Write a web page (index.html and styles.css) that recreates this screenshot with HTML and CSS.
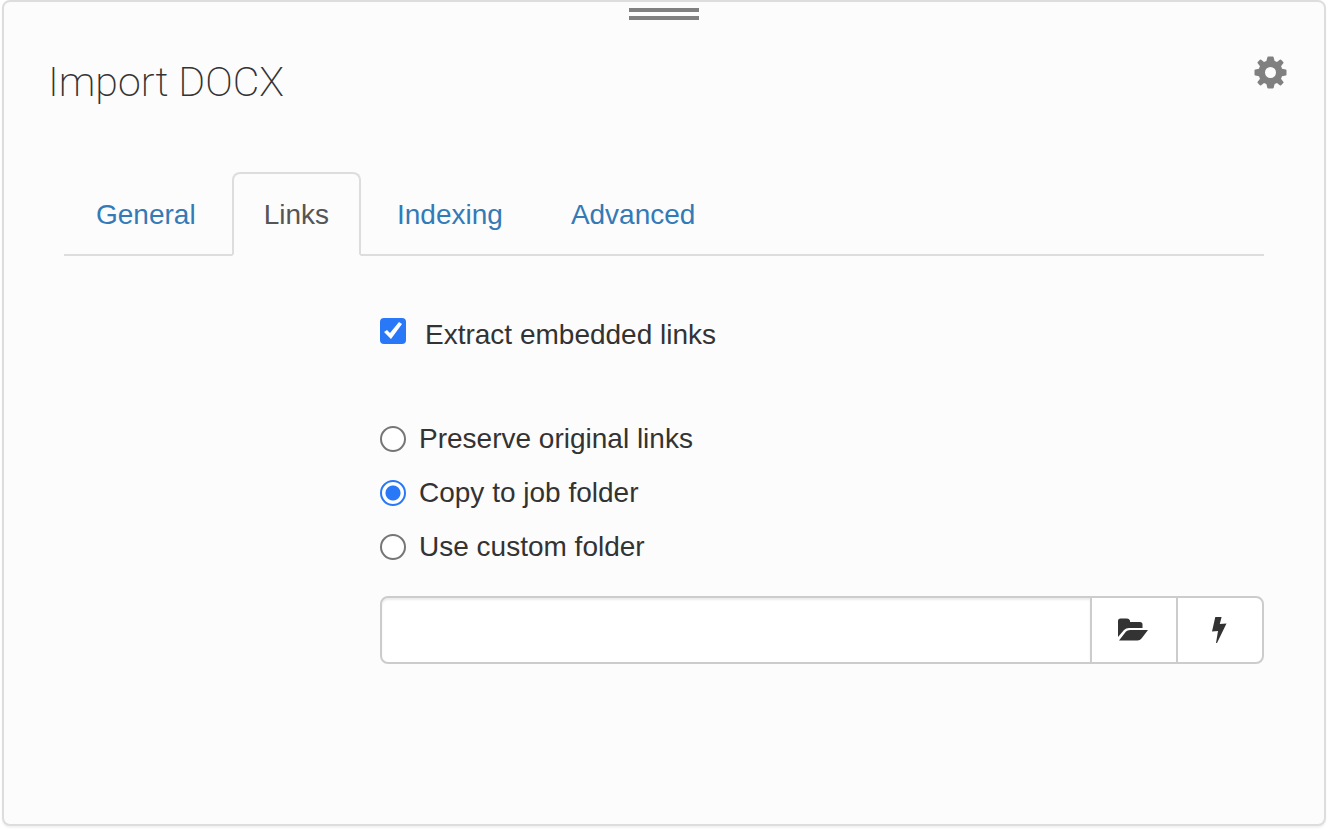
FILE: index.html
```html
<!DOCTYPE html>
<html lang="en">
<head>
  <meta charset="UTF-8">
  <meta name="viewport" content="width=device-width, initial-scale=1.0">
  <title>Import DOCX</title>
  <link rel="stylesheet" href="styles.css">
</head>
<body>
  <div class="panel">
    <div class="drag-handle"></div>

    <div class="panel-header">
      <h1 class="panel-title">Import DOCX</h1>
      <button type="button" class="settings-btn" aria-label="Settings">
        <svg width="34" height="34" viewBox="0 0 34 34" fill="currentColor">
          <path fill-rule="evenodd" d="M14.300.6H18.700Q19.500.6 19.700 1.400L20.600 5Q22 5.400 23 6L25.800 3.700Q26.500 3.200 27.100 3.700L29.300 5.900Q29.800 6.500 29.300 7.200L27 10.300Q27.600 11.300 28 12.700L31.800 13.600Q32.500 13.800 32.500 14.600V18.400Q32.500 19.200 31.800 19.400L28 20.300Q27.600 21.700 27 22.700L29.300 25.800Q29.800 26.500 29.300 27.100L27.100 29.300Q26.500 29.800 25.800 29.300L23 27Q22 27.600 20.600 28L19.700 31.800Q19.500 32.500 18.700 32.500H14.300Q13.500 32.500 13.300 31.800L12.400 28Q11 27.600 10 27L7.200 29.300Q6.500 29.800 5.900 29.300L3.700 27.100Q3.200 26.500 3.700 25.800L6 22.700Q5.400 21.700 5 20.300L1.300 19.400Q.5 19.200 .5 18.400V14.600Q.5 13.800 1.300 13.600L5 12.700Q5.400 11.300 6 10.300L3.700 7.200Q3.200 6.500 3.700 5.900L5.900 3.700Q6.500 3.200 7.200 3.700L10 6Q11 5.400 12.400 5L13.300 1.400Q13.500.6 14.300.6zM16.500 11a5.500 5.500 0 1 0 0 11a5.500 5.500 0 1 0 0-11z"/>
        </svg>
      </button>
    </div>

    <div class="panel-body">
      <!-- Tabs -->
      <ul class="nav-tabs">
        <li><a href="#general">General</a></li>
        <li class="active"><a href="#links">Links</a></li>
        <li><a href="#indexing">Indexing</a></li>
        <li><a href="#advanced">Advanced</a></li>
      </ul>

      <!-- Links tab -->
      <form class="tab-pane" id="links">
        <div class="checkbox">
          <input type="checkbox" id="extract" name="extract" checked>
          <label for="extract">Extract embedded links</label>
        </div>

        <div class="radio">
          <input type="radio" id="preserve" name="target" value="preserve">
          <label for="preserve">Preserve original links</label>
        </div>
        <div class="radio">
          <input type="radio" id="copy" name="target" value="copy" checked>
          <label for="copy">Copy to job folder</label>
        </div>
        <div class="radio">
          <input type="radio" id="custom" name="target" value="custom">
          <label for="custom">Use custom folder</label>
        </div>

        <div class="input-group">
          <input type="text" class="form-control" name="folder" aria-label="Custom folder">
          <button type="button" class="btn" aria-label="Browse folder">
            <svg width="32" height="24" viewBox="0 0 32 24" fill="currentColor">
              <path d="M0 19V3Q0 .5 2.500 .5H9Q11 .5 12 2.500V4H22Q24.500 4 24.500 6.500V10H11Q8 10 6 12z"/>
              <path d="M1 22.500L8 13.500Q9.500 12 12 12H30L23.500 20.500Q22 22.500 19.500 22.500z"/>
            </svg>
          </button>
          <button type="button" class="btn" aria-label="Quick insert">
            <svg width="18" height="28" viewBox="0 0 18 28" fill="currentColor">
              <path d="M4.300 1H10.600L8.800 8L15.500 7.500L6 27H5L7 15L1 15.500z"/>
            </svg>
          </button>
        </div>
      </form>
    </div>
  </div>
</body>
</html>
```

FILE: styles.css
```css
* {
  box-sizing: border-box;
}
body {
  margin: 0;
  padding: 0 2px 4px;
  min-height: 100vh;
  display: flex;
  background-color: #fff;
  color: #333;
  font-family: "Helvetica Neue", Helvetica, "Liberation Sans", Arial, sans-serif;
  font-size: 28px;
  line-height: 40px;
}
.panel {
  flex: 1;
  padding: 6px 36px;
  background-color: #fcfcfc;
  border: 2px solid #ddd;
  border-radius: 8px;
  box-shadow: 0 2px 2px rgba(0, 0, 0, 0.05);
}
.drag-handle {
  width: 70px;
  height: 12px;
  margin: 0 auto;
  border-top: 4px solid #808080;
  border-bottom: 4px solid #808080;
}
.panel-header {
  display: flex;
  justify-content: space-between;
  align-items: flex-start;
  padding: 36px 0 0 8px;
}
.panel-title {
  margin: 0;
  font-family: Roboto, sans-serif;
  font-size: 41px;
  font-weight: 200;
  line-height: 52px;
}
.settings-btn {
  padding: 0;
  border: none;
  background: none;
  color: #808080;
  cursor: pointer;
}
.settings-btn svg,
.btn svg {
  display: block;
}
.panel-body {
  padding: 64px 24px 0;
}

/* Tabs */
.nav-tabs {
  display: flex;
  gap: 4px;
  margin: 0;
  padding: 0;
  list-style: none;
  border-bottom: 2px solid #ddd;
}
.nav-tabs li {
  margin-bottom: -2px;
}
.nav-tabs a {
  display: block;
  padding: 21px 30px 19px;
  border: 2px solid transparent;
  border-radius: 8px 8px 0 0;
  color: #337ab7;
  text-decoration: none;
}
.nav-tabs .active a {
  color: #555;
  background-color: #fcfcfc;
  border-color: #ddd;
  border-bottom-color: #fcfcfc;
}

/* Form */
.tab-pane {
  margin-left: calc(25% + 16px);
  padding-top: 59px;
}
.checkbox,
.radio {
  display: flex;
  align-items: center;
}
.checkbox {
  gap: 19px;
  margin-bottom: 64px;
}
.radio {
  gap: 13px;
  margin-bottom: 14px;
}
input[type="checkbox"],
input[type="radio"] {
  appearance: none;
  flex: none;
  width: 26px;
  height: 26px;
  margin: 0;
  background-color: #fff;
  border: 2px solid #767676;
}
input[type="checkbox"] {
  margin-bottom: 8px;
  border-radius: 4px;
}
input[type="checkbox"]:checked {
  border: none;
  background-color: #2878f8;
}
input[type="checkbox"]:checked::before {
  content: "";
  display: block;
  height: 100%;
  background-color: #fff;
  clip-path: polygon(4px 14px, 7px 12px, 10px 15px, 19px 4px, 22px 6px, 11px 21px);
}
input[type="radio"] {
  border-radius: 50%;
}
input[type="radio"]:checked {
  border-color: #2878f8;
  background: radial-gradient(circle, #2878f8 7px, #fff 8px);
}
.input-group {
  display: flex;
  margin-top: 29px;
}
.form-control {
  flex: 1;
  min-width: 0;
  height: 68px;
  padding: 12px 24px;
  font: inherit;
  background-color: #fff;
  border: 2px solid #ccc;
  border-radius: 8px 0 0 8px;
  box-shadow: inset 0 2px 2px rgba(0, 0, 0, 0.075);
}
.btn {
  display: flex;
  align-items: center;
  justify-content: center;
  width: 88px;
  margin-left: -2px;
  padding: 0;
  color: #333;
  background-color: #fff;
  border: 2px solid #ccc;
  cursor: pointer;
}
.btn:last-child {
  border-radius: 0 8px 8px 0;
}
```
